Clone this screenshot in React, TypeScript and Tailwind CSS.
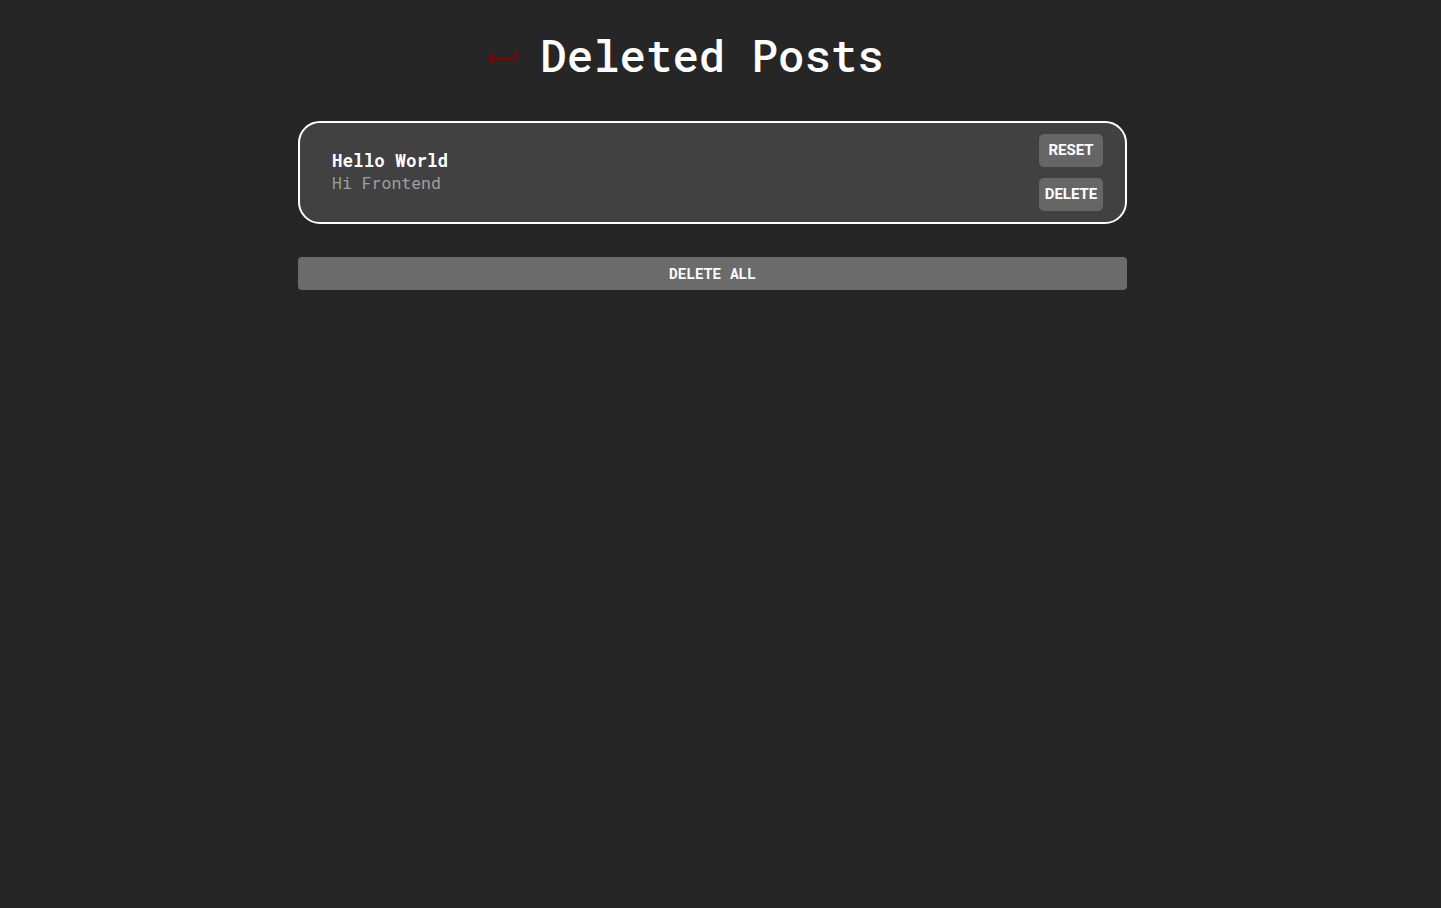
import React from "react";

const mono = "font-['Roboto_Mono','DejaVu_Sans_Mono',monospace]";

export default function App() {
  return (
    <div className={`min-h-screen w-full bg-[#262626] pr-[16px] text-white ${mono}`}>
      <div className="mx-auto flex w-[829px] flex-col pt-[27px]">
        {/* Title */}
        <div className="flex items-center justify-center pr-[54px]">
          <svg
            width="31"
            height="15"
            viewBox="0 0 31 15"
            fill="none"
            className="mr-[22px] mt-[3px]"
          >
            <path
              d="M1.5 9.5H28.5V1.5M1.5 9.5L6.5 5M1.5 9.5L6.5 14"
              stroke="#8b0000"
              strokeWidth="2"
              strokeLinecap="round"
              strokeLinejoin="round"
            />
          </svg>
          <h1 className="text-[44px] font-medium leading-[56px]">Deleted Posts</h1>
        </div>

        {/* Post card */}
        <div className="mt-[38px] flex h-[103px] items-center justify-between rounded-[22px] border-2 border-white bg-[#414141] pl-[32px] pr-[22px]">
          <div className="-mt-[2px] flex flex-col">
            <span className="text-[17.6px] font-bold leading-[22px]">Hello World</span>
            <span className="text-[16.5px] leading-[22px] text-[#a0a0a0]">Hi Frontend</span>
          </div>
          <div className="flex flex-col gap-[11px] font-['Roboto','Liberation_Sans',sans-serif]">
            <button className="h-[33px] w-[64px] rounded-[5px] bg-[#666666] text-center text-[15px] font-bold text-white">
              RESET
            </button>
            <button className="h-[33px] w-[64px] rounded-[5px] bg-[#666666] text-center text-[15px] font-bold text-white">
              DELETE
            </button>
          </div>
        </div>

        {/* Delete all */}
        <button className="mt-[33px] h-[33px] w-full rounded-[4px] bg-[#6b6b6b] text-center text-[14.5px] font-bold text-white">
          DELETE ALL
        </button>
      </div>
    </div>
  );
}
